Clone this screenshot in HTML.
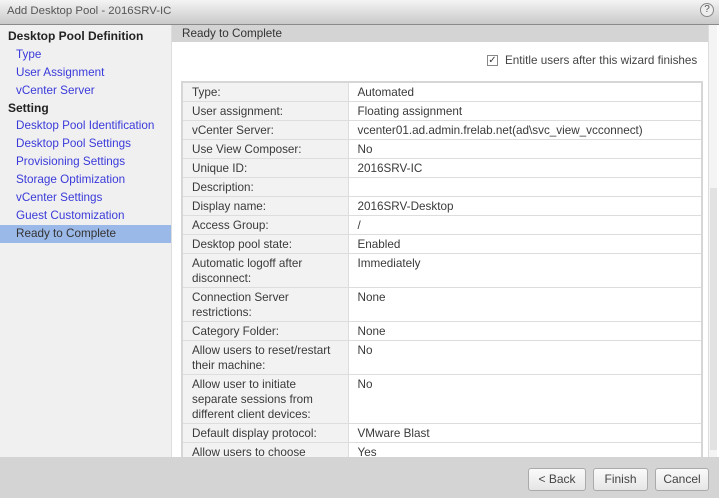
<!DOCTYPE html>
<html><head><style>
*{margin:0;padding:0;box-sizing:border-box}
body{width:719px;height:498px;overflow:hidden;font-family:"Liberation Sans",sans-serif;font-size:11.7px;color:#3a3a3a;background:#fff;position:relative}
.title{position:absolute;left:0;top:0;width:719px;height:25px;background:linear-gradient(#f4f4f4,#c9c9c9);border-bottom:1px solid #8a8a8a;}
.title span{position:absolute;left:7px;top:5px;font-size:11.4px;color:#555}
.help{position:absolute;right:5px;top:3px;width:14px;height:14px;border:1px solid #888;border-radius:50%;font-size:10px;text-align:center;line-height:12px;color:#555;background:#eee}
.nav{position:absolute;left:0;top:25px;width:172px;height:432px;background:#f0f0f0;border-right:1px solid #ddd;padding-top:3px}
.nav div{height:17.9px;line-height:17.9px;padding-left:16px;color:#3a3adb}
.nav div.h{padding-left:8px;color:#222;font-weight:bold;font-size:12px}
.nav div.sel{background:#9bb9e8;color:#333}
.hdr{position:absolute;left:172px;top:25px;width:536px;height:17px;background:#d4d4d4;padding-left:10px;line-height:17px;color:#333}
.chk{position:absolute;left:487px;top:55px;width:11px;height:11px;border:1px solid #888;background:#fff;font-size:10px;line-height:9px;text-align:center}
.ent{position:absolute;left:505px;top:54px;color:#444}
.wrap{position:absolute;left:181px;top:81px;width:522px;height:376px;overflow:hidden}
table{width:522px;border-collapse:collapse;border:2px solid #d6d6d6}
td{border-bottom:1px solid #ddd;vertical-align:top;padding:2px 10px 1px 9px;line-height:15px}
td.l{width:166px;background:#f2f2f2;border-right:1px solid #ddd}
.sb{position:absolute;left:708px;top:25px;width:9px;height:432px;background:#f4f4f4;border-left:1px solid #ddd}
.thumb{position:absolute;left:1px;top:163px;width:7px;height:262px;background:#e2e2e2}
.foot{position:absolute;left:0;top:457px;width:719px;height:41px;background:#d4d4d4}
.btn{position:absolute;top:11px;height:23px;border:1px solid #aaa;border-radius:3px;background:linear-gradient(#fafafa,#e6e6e6);text-align:center;line-height:21px;color:#444;font-size:12px}
</style></head><body>
<div class="title"><span>Add Desktop Pool - 2016SRV-IC</span><div class="help">?</div></div>
<div class="nav">
<div class="h">Desktop Pool Definition</div>
<div>Type</div><div>User Assignment</div><div>vCenter Server</div>
<div class="h">Setting</div>
<div>Desktop Pool Identification</div><div>Desktop Pool Settings</div><div>Provisioning Settings</div><div>Storage Optimization</div><div>vCenter Settings</div><div>Guest Customization</div><div class="sel">Ready to Complete</div>
</div>
<div class="hdr">Ready to Complete</div>
<div class="chk">✓</div><div class="ent">Entitle users after this wizard finishes</div>
<div class="wrap"><table>
<tr><td class="l">Type:</td><td>Automated</td></tr>
<tr><td class="l">User assignment:</td><td>Floating assignment</td></tr>
<tr><td class="l">vCenter Server:</td><td>vcenter01.ad.admin.frelab.net(ad\svc_view_vcconnect)</td></tr>
<tr><td class="l">Use View Composer:</td><td>No</td></tr>
<tr><td class="l">Unique ID:</td><td>2016SRV-IC</td></tr>
<tr><td class="l">Description:</td><td></td></tr>
<tr><td class="l">Display name:</td><td>2016SRV-Desktop</td></tr>
<tr><td class="l">Access Group:</td><td>/</td></tr>
<tr><td class="l">Desktop pool state:</td><td>Enabled</td></tr>
<tr><td class="l">Automatic logoff after<br>disconnect:</td><td>Immediately</td></tr>
<tr><td class="l">Connection Server<br>restrictions:</td><td>None</td></tr>
<tr><td class="l">Category Folder:</td><td>None</td></tr>
<tr><td class="l">Allow users to reset/restart<br>their machine:</td><td>No</td></tr>
<tr><td class="l">Allow user to initiate<br>separate sessions from<br>different client devices:</td><td>No</td></tr>
<tr><td class="l">Default display protocol:</td><td>VMware Blast</td></tr>
<tr><td class="l">Allow users to choose<br>protocol:</td><td>Yes</td></tr>
</table></div>
<div class="sb"><div class="thumb"></div></div>
<div class="foot">
<div class="btn" style="left:528px;width:58px">&lt; Back</div>
<div class="btn" style="left:593px;width:55px">Finish</div>
<div class="btn" style="left:655px;width:54px">Cancel</div>
</div>
</body></html>
